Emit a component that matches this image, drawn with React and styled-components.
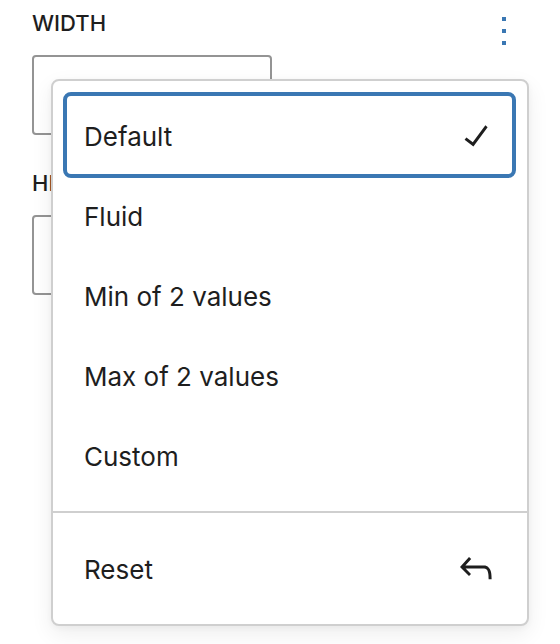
import styled, { createGlobalStyle } from "styled-components";

const GlobalStyle = createGlobalStyle`
  html, body {
    margin: 0;
    padding: 0;
    background: #ffffff;
  }
  body {
    font-family: Inter, "Noto Sans", "Liberation Sans", sans-serif;
    color: #1e1e1e;
    -webkit-font-smoothing: antialiased;
  }
`;

const Page = styled.div`
  position: relative;
  width: 560px;
  height: 644px;
  overflow: hidden;
`;

const Panel = styled.div`
  padding: 7px 54px 0 32px;
`;

const HeaderRow = styled.div`
  display: flex;
  justify-content: space-between;
  align-items: flex-start;
  height: 32px;
`;

const Label = styled.div`
  font-size: 22px;
  font-weight: 500;
  line-height: 32px;
  height: 32px;
  text-transform: uppercase;
  color: #1e1e1e;
  margin-top: ${(p) => p.$gap || 0}px;
`;

const KebabButton = styled.button`
  border: 0;
  background: none;
  padding: 0;
  margin-top: 9.7px;
  display: flex;
  cursor: pointer;
`;

const Field = styled.div`
  box-sizing: border-box;
  width: 240px;
  height: 80px;
  margin-top: 16px;
  border: 2px solid #949494;
  border-radius: 4px;
  background: #fff;
`;

const Menu = styled.div`
  position: absolute;
  left: 51px;
  top: 79px;
  width: 478px;
  box-sizing: border-box;
  background: #fff;
  border: 2px solid #cfcfcf;
  border-radius: 8px;
  box-shadow: 0 8px 22px rgba(0, 0, 0, 0.07), 0 2px 6px rgba(0, 0, 0, 0.04);
`;

const Group = styled.div`
  padding: ${(p) => p.$pad};
  & + & {
    border-top: 2px solid #cfcfcf;
  }
`;

const Item = styled.div`
  box-sizing: border-box;
  display: flex;
  align-items: center;
  justify-content: space-between;
  height: 80px;
  padding: 3px 13px 0 18px;
  font-size: 26px;
  color: #1e1e1e;
  border-radius: 5px;
  outline: ${(p) => (p.$focused ? "4px solid #3a77b3" : "none")};
  outline-offset: -1px;
`;

const IconBox = styled.svg`
  width: 48px;
  height: 48px;
  flex: none;
  margin-top: -3px;
  fill: #1e1e1e;
`;

const CheckIcon = () => (
  <IconBox viewBox="0 0 24 24">
    <path d="M16.7 7.1l-6.3 8.5-3.2-2.4-.9 1.2 4.4 3.3 7.1-9.6z" />
  </IconBox>
);

const UndoIcon = () => (
  <IconBox viewBox="0 0 24 24">
    <path d="M18.3 11.7c-.6-.6-1.4-.9-2.3-.9H6.7l2.9-3.3-1.1-1-4.5 5L8.5 16l1-1-2.7-2.7H16c.5 0 .9.2 1.3.5 1 1 1 3.4 1 4.5v.3h1.5v-.2c0-1.5 0-4.3-1.5-5.7z" />
  </IconBox>
);

const options = ["Default", "Fluid", "Min of 2 values", "Max of 2 values", "Custom"];

export default function App() {
  return (
    <Page>
      <GlobalStyle />
      <Panel>
        <HeaderRow>
          <Label>Width</Label>
          <KebabButton aria-label="Options">
            <svg width="4" height="28" viewBox="0 0 4 28" fill="#3a77b3">
              <rect x="0" y="0" width="4" height="4" />
              <rect x="0" y="12" width="4" height="4" />
              <rect x="0" y="24" width="4" height="4" />
            </svg>
          </KebabButton>
        </HeaderRow>
        <Field />
        <Label $gap={32}>Height</Label>
        <Field />
      </Panel>

      <Menu role="menu">
        <Group $pad="14px 14px 16px 13px">
          {options.map((label, i) => (
            <Item key={label} $focused={i === 0} role="menuitemradio">
              <span>{label}</span>
              {i === 0 && <CheckIcon />}
            </Item>
          ))}
        </Group>
        <Group $pad="15px 14px 16px 13px">
          <Item role="menuitem">
            <span>Reset</span>
            <UndoIcon />
          </Item>
        </Group>
      </Menu>
    </Page>
  );
}
